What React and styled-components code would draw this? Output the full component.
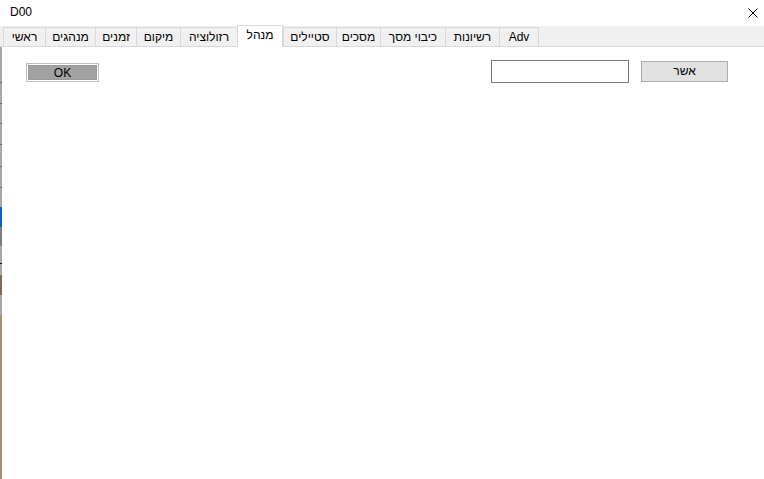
import React from 'react';
import styled, { createGlobalStyle } from 'styled-components';

const GlobalStyle = createGlobalStyle`
  html, body {
    margin: 0;
    padding: 0;
    background: #ffffff;
  }
  #root {
    height: 100vh;
  }
  * {
    box-sizing: border-box;
  }
`;

const TABS = [
  { label: 'ראשי', width: 42 },
  { label: 'מנהגים', width: 50 },
  { label: 'זמנים', width: 41 },
  { label: 'מיקום', width: 44 },
  { label: 'רזולוציה', width: 57 },
  { label: 'מנהל', width: 46, active: true },
  { label: 'סטיילים', width: 53 },
  { label: 'מסכים', width: 44 },
  { label: 'כיבוי מסך', width: 65 },
  { label: 'רשיונות', width: 54 },
  { label: 'Adv', width: 40 },
];

// bits of the desktop that peek out at the left edge of the window
const EDGE = [
  { h: 35, c: '#a9a9a9' },
  { h: 1, c: '#6a6a6a' },
  { h: 20, c: '#a9a9a9' },
  { h: 1, c: '#6a6a6a' },
  { h: 19, c: '#a9a9a9' },
  { h: 1, c: '#6a6a6a' },
  { h: 20, c: '#a9a9a9' },
  { h: 1, c: '#6a6a6a' },
  { h: 21, c: '#a9a9a9' },
  { h: 1, c: '#6a6a6a' },
  { h: 20, c: '#a9a9a9' },
  { h: 1, c: '#6a6a6a' },
  { h: 19, c: '#a9a9a9' },
  { h: 20, c: '#1160b8' },
  { h: 19, c: '#7d7d7d' },
  { h: 17, c: '#a9a9a9' },
  { h: 1, c: '#111111' },
  { h: 11, c: '#a9a9a9' },
  { h: 20, c: '#7a6a52' },
  { h: 20, c: '#a9a9a9' },
  { h: 0, c: '#a4926e', fill: true },
];

const Window = styled.div`
  display: flex;
  flex-direction: column;
  height: 100%;
  background: #ffffff;
  font-family: "Liberation Sans", "DejaVu Sans", Arial, sans-serif;
  font-size: 12px;
  color: #000000;
`;

const TitleBar = styled.div`
  display: flex;
  align-items: center;
  justify-content: space-between;
  height: 26px;
  padding: 0 5px 2px 10px;
`;

const Title = styled.span`
  font-size: 12px;
`;

const CloseButton = styled.button`
  display: flex;
  align-items: center;
  justify-content: center;
  width: 12px;
  height: 12px;
  padding: 0;
  border: none;
  background: transparent;
  margin-top: 2px;
`;

const TabRow = styled.div`
  display: flex;
  align-items: flex-end;
  height: 21px;
  padding-left: 3px;
  background: #f0f0f0;
  border-bottom: 1px solid #d9d9d9;
`;

const Tab = styled.div`
  display: flex;
  align-items: center;
  justify-content: center;
  width: ${(p) => p.$width}px;
  height: ${(p) => (p.$active ? 22 : 19)}px;
  margin-bottom: ${(p) => (p.$active ? -1 : 0)}px;
  padding-bottom: ${(p) => (p.$active ? 3 : 1)}px;
  background: ${(p) => (p.$active ? '#ffffff' : '#f0f0f0')};
  border: 1px solid #d9d9d9;
  border-bottom: none;
  border-right: ${(p) => (p.$last || p.$active ? '1px solid #d9d9d9' : 'none')};
  white-space: nowrap;
  position: relative;
  z-index: ${(p) => (p.$active ? 1 : 0)};
`;

const Body = styled.div`
  flex: 1;
  display: flex;
`;

const Edge = styled.div`
  display: flex;
  flex-direction: column;
  width: 2px;
`;

const EdgeBit = styled.div`
  flex: ${(p) => (p.$fill ? '1' : `0 0 ${p.$h}px`)};
  background: ${(p) => p.$c};
`;

const Content = styled.div`
  flex: 1;
  display: flex;
  justify-content: space-between;
  align-items: flex-start;
  padding: 13px 36px 0 24px;
`;

const OkButton = styled.button`
  width: 73px;
  height: 19px;
  margin-top: 3px;
  padding: 1px;
  border: 1px solid #bdbdbd;
  background: #ffffff;
  font: inherit;
  display: flex;
`;

const OkFace = styled.span`
  flex: 1;
  display: flex;
  align-items: center;
  justify-content: center;
  background: #a2a2a2;
  border: 1px solid #999999;
  color: #000000;
  font-size: 12px;
`;

const RightGroup = styled.div`
  display: flex;
  align-items: flex-start;
  gap: 12px;
`;

const TextBox = styled.input`
  width: 138px;
  height: 23px;
  border: 1px solid #7a7a7a;
  background: #ffffff;
  padding: 0 4px;
  font: inherit;
  outline: none;
`;

const PlainButton = styled.button`
  width: 87px;
  height: 21px;
  margin-top: 1px;
  border: 1px solid #adadad;
  background: #e1e1e1;
  font: inherit;
  font-size: 12px;
  color: #000000;
  display: flex;
  align-items: center;
  justify-content: center;
  padding: 0 0 1px;
`;

export default function App() {
  return (
    <>
      <GlobalStyle />
      <Window>
        <TitleBar>
          <Title>D00</Title>
          <CloseButton aria-label="close">
            <svg width="10" height="10" viewBox="0 0 10 10">
              <path d="M0.5 0.5 L9.5 9.5 M9.5 0.5 L0.5 9.5" stroke="#000" strokeWidth="1" fill="none" />
            </svg>
          </CloseButton>
        </TitleBar>
        <TabRow>
          {TABS.map((t, i) => (
            <Tab key={t.label} $width={t.width} $active={t.active} $last={i === TABS.length - 1} dir="rtl">
              {t.label}
            </Tab>
          ))}
        </TabRow>
        <Body>
          <Edge>
            {EDGE.map((b, i) => (
              <EdgeBit key={i} $h={b.h} $c={b.c} $fill={b.fill} />
            ))}
          </Edge>
          <Content>
            <OkButton>
              <OkFace>OK</OkFace>
            </OkButton>
            <RightGroup>
              <TextBox dir="rtl" />
              <PlainButton dir="rtl">אשר</PlainButton>
            </RightGroup>
          </Content>
        </Body>
      </Window>
    </>
  );
}
